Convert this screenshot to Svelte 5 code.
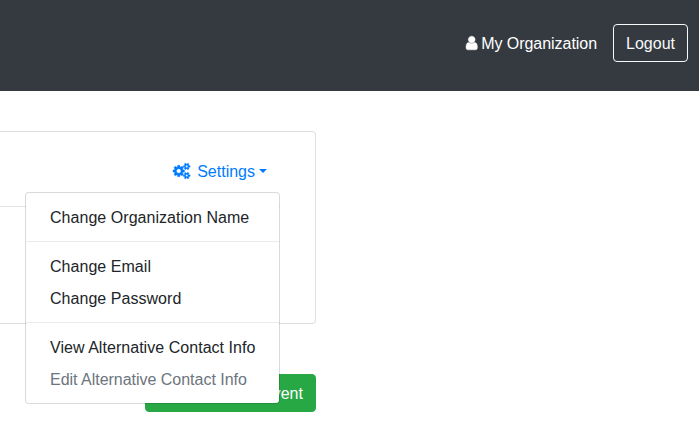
<script>
  const groups = [
    [{ label: 'Change Organization Name' }],
    [{ label: 'Change Email' }, { label: 'Change Password' }],
    [{ label: 'View Alternative Contact Info' }, { label: 'Edit Alternative Contact Info', disabled: true }]
  ];
  const smallGear =
    'v140q0 16-149 31-12 27-30 52 51 113 51 138 0 4-4 7-122 71-124 71-8 0-46-47t-52-68q-20 2-30 2t-30-2q-14 21-52 68t-46 47q-2 0-124-71-4-3-4-7 0-25 51-138-18-25-30-52-149-15-149-31v-140q0-16 149-31 13-29 30-52-51-113-51-138 0-4 4-7 4-2 35-20t59-34 30-16q8 0 46 46.500t52 67.500q20-2 30-2t30 2q51-71 92-112l6-2q4 0 124 70 4 3 4 7 0 25-51 138 17 23 30 52 149 15 149 31z';
  const cogs =
    'M896 896q0-106-75-181t-181-75-181 75-75 181 75 181 181 75 181-75 75-181zm768 512q0-52-38-90t-90-38-90 38-38 90q0 53 37.500 90.500t90.500 37.500 90.500-37.500 37.500-90.500zm0-1024q0-52-38-90t-90-38-90 38-38 90q0 53 37.500 90.500t90.500 37.500 90.500-37.500 37.500-90.500zm-384 421v185q0 10-7 19.500t-16 10.500l-155 24q-11 35-32 76 34 48 90 115 7 11 7 20 0 12-7 19-23 30-82.500 89.500t-78.500 59.500q-11 0-21-7l-115-90q-37 19-77 31-11 108-23 155-7 24-30 24h-186q-11 0-20-7.500t-10-17.500l-23-153q-34-10-75-31l-118 89q-7 7-20 7-11 0-21-8-144-133-144-160 0-9 7-19 10-14 41-53t47-61q-23-44-35-82l-152-24q-10-1-17-9.500t-7-19.500v-185q0-10 7-19.500t16-10.500l155-24q11-35 32-76-34-48-90-115-7-11-7-20 0-12 7-20 22-30 82-89t79-59q11 0 21 7l115 90q34-18 77-32 11-108 23-154 7-24 30-24h186q11 0 20 7.500t10 17.500l23 153q34 10 75 31l118-89q8-7 20-7 11 0 21 8 144 133 144 160 0 8-7 19-12 16-42 54t-45 60q23 48 34 82l152 23q10 2 17 10.500t7 19.500zm640 533' +
    smallGear + 'm0-1024' + smallGear;
</script>

<div class="page">
  <header>
    <a class="org" href="#org">
      <svg class="user" viewBox="256 0 1280 1792" aria-hidden="true"><path d="M1536 1399q0 109-62.500 187t-150.500 78h-854q-88 0-150.500-78t-62.500-187q0-85 8.500-160.500t31.500-152 58.500-131 94-89 134.500-34.500q131 128 313 128t313-128q76 0 134.500 34.500t94 89 58.500 131 31.500 152 8.500 160.500zm-256-887q0 159-112.500 271.500t-271.500 112.500-271.500-112.500-112.500-271.500 112.500-271.500 271.500-112.500 271.500 112.500 112.500 271.500z" /></svg>
      <span>My Organization</span>
    </a>
    <button class="btn logout">Logout</button>
  </header>

  <main>
    <section class="card">
      <div class="dropdown">
        <button class="btn settings">
          <svg class="cogs" viewBox="0 0 1920 1792" aria-hidden="true"><path d={cogs} /></svg>
          <span>Settings</span>
          <i class="caret"></i>
        </button>
        <div class="menu">
          {#each groups as group, i}
            {#if i > 0}<div class="divider"></div>{/if}
            {#each group as item}
              <a class="item" class:disabled={item.disabled} href="#settings">{item.label}</a>
            {/each}
          {/each}
        </div>
      </div>
      <hr />
    </section>
    <button class="btn create">Create New Event</button>
  </main>
</div>

<style>
  .page {
    height: 431px;
    overflow: hidden;
    background: #fff;
    color: #212529;
    font: 16px/24px 'Liberation Sans', Arial, sans-serif;
  }
  .page *, .page { box-sizing: border-box; }
  a { color: inherit; text-decoration: none; }
  svg {
    display: block;
    flex: none;
    height: 16px;
    overflow: visible;
    fill: currentColor;
    stroke: currentColor;
    stroke-width: 45;
  }
  header {
    display: flex;
    justify-content: flex-end;
    align-items: flex-start;
    gap: 16px;
    height: 91px;
    padding: 24px 11px 0 0;
    background: #343a40;
    color: #fff;
  }
  .org { display: flex; align-items: flex-start; padding-top: 8px; letter-spacing: -0.04px; }
  .user { width: 11.43px; margin: 3px 4px 0 0; }
  .btn {
    height: 38px;
    padding: 7px 12px 5px;
    border: 1px solid transparent;
    border-radius: 4px;
    background: transparent;
    font: inherit;
    white-space: nowrap;
  }
  .logout { color: #f8f9fa; border-color: #f8f9fa; }
  main {
    display: flex;
    flex-direction: column;
    align-items: flex-end;
    width: 316px;
    padding-top: 40px;
  }
  .card {
    width: 100%;
    height: 193px;
    padding: 20px 35px 0 0;
    border: 1px solid rgba(0, 0, 0, 0.125);
    border-left: 0;
    border-radius: 0 4px 4px 0;
  }
  .dropdown { position: relative; display: flex; justify-content: flex-end; }
  .settings { display: flex; align-items: flex-start; color: #007bff; }
  .cogs { width: 17.14px; margin: 3px 7px 0 0; }
  .caret {
    margin: 9px 0 0 4px;
    border-top: 4.8px solid;
    border-right: 4.8px solid transparent;
    border-left: 4.8px solid transparent;
  }
  .menu {
    position: absolute;
    top: 40px;
    right: 0;
    z-index: 2;
    width: 255px;
    padding: 8px 0;
    border: 1px solid rgba(0, 0, 0, 0.15);
    border-radius: 4px;
    background: #fff;
    background-clip: padding-box;
  }
  .item { display: block; padding: 5px 24px 3px; white-space: nowrap; letter-spacing: 0.04px; }
  .disabled { color: #6c757d; letter-spacing: -0.02px; }
  .divider { height: 1px; margin: 8px 0; background: #e9ecef; }
  hr { margin: 16px 0; border: 0; border-top: 1px solid rgba(0, 0, 0, 0.1); }
  .create {
    width: 171px;
    margin-top: 50px;
    background: #28a745;
    border-color: #28a745;
    color: #fff;
    text-align: right;
    letter-spacing: 0.04px;
  }
</style>
